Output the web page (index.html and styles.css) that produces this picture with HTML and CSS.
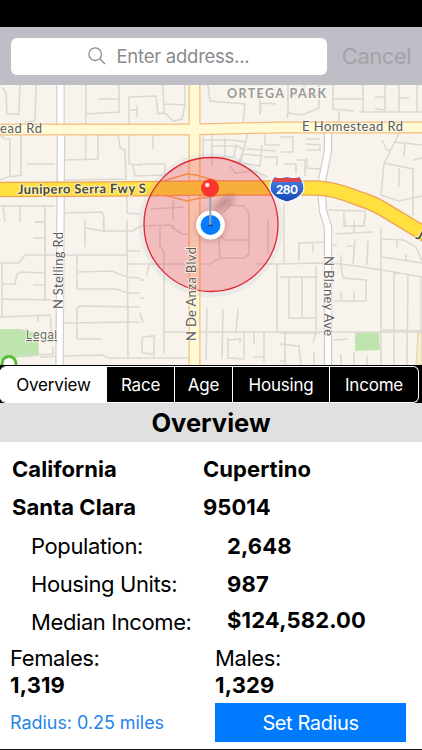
FILE: index.html
```html
<!DOCTYPE html>
<html lang="en">
<head>
    <meta charset="UTF-8">
    <meta name="viewport" content="width=device-width, initial-scale=1.0">
    <title>Overview</title>
    <link rel="stylesheet" href="styles.css">
</head>
<body>
    <div class="status-bar"></div>

    <!-- Search -->
    <div class="search-bar">
        <div class="search-field">
            <svg class="search-icon" viewBox="0 0 18 18">
                <circle cx="7.2" cy="7.2" r="6.3"/>
                <path d="M11.8 11.8L17 17"/>
            </svg>
            <span class="placeholder">Enter address...</span>
        </div>
        <span class="cancel">Cancel</span>
    </div>

    <!-- Map -->
    <svg class="map" viewBox="0 85 422 280">
        <defs>
            <linearGradient id="shield" x1="0" y1="0" x2="0" y2="1">
                <stop offset="0" stop-color="#4b86e8"/>
                <stop offset="1" stop-color="#1546b5"/>
            </linearGradient>
            <filter id="soft" x="-50%" y="-50%" width="200%" height="200%">
                <feGaussianBlur stdDeviation="3"/>
            </filter>
        </defs>

        <!-- Parks -->
        <path class="park" d="M0 329L20 329L28 331L38 333L39 356L14 358L0 360Z"/>
        <path class="park" d="M355 333L379 332L380 350L355 351Z"/>
        <path class="school" d="M422 333H418L416 365H422Z"/>

        <!-- Small streets -->
        <g class="street">
            <path d="M2 87L6 93L7 114H19L20 85M36 85L35 121L25 122M86 85L85.500 161M86 114L119 112V85M98 99H119M129 124V97L156 96L158 114M130 110H137M137 105V117M163 85L164 113L157 114M164 104L185 105L182 119L173 121L165 113M185 85V105"/>
            <path d="M0 135L5 139H10V176L0 180M21 133V175L10 177M27 164H55M65 160L98 159V135L118 134L120 148L125 150L126 179L65 180M129 133V164L142 165M133 165L135 176L165 175V164H140M153 134V149M0 206H55M3 206L5 222M20 205V222M35 222H46M45 206V300M65 213L102 212L104 218V232M127 196V213L140 214"/>
            <path d="M208 85L210 101L245 104L243 123M260 90V113M260 103L276 104M261 105L260 115M288 85V113L287 118M288 113L302 115L319 108V85M288 95H319M304 85V95M333 85V109L354 111M333 99H363M339 111V123M363 85V111M375 97H385M385 85V110L375 109M359 112H422M399 85V112M417 85V112M399 98H409"/>
            <path d="M203 137V158M212 134V166M203 140H230L246 142M212 146H235M212 157H234L236 145L244 150L238 163M225 138V156M248 133L240 163L260 166L262 145M246 149L276 151M265 133V145H280M264 157H277V166M243 154L263 156M280 137H293V152H281M306 144L320 145V150H307M306 139H320M307 158V168L320 169M284 164H296V174M296 160H305V176"/>
            <path d="M382 140L387 150L391 151M399 133L384 164L381 195L399 201L422 196M384 163L413 169V216M394 142L422 145M405 143L404 156M422 158L413 160M399 168V187M328 210L365 211V222M344 211V226H363"/>
            <path d="M35 222H45M33 238H45M0 263H19L25 255H128M45 220V299M2 263V316M2 284H15L17 274L22 272L45 273M33 285H45M2 299L53 300M0 317L50 315L52 334M38 314V322M27 328L24 333M53 346V354L19 356M40 357L64 356L102 355L109 358H141"/>
            <path d="M85 220V247M85 228L104 231H133L140 226M103 220L104 230M127 220L128 358M128 251H140M77 256V289H117L127 293H140M77 272L112 271L127 277L140 278M128 264H140M63 323L140 322M77 339V308L80 306L140 307M77 339H102M128 308V323"/>
            <path d="M140 226L170 225L182 234H188M160 225V246L164 252V353M140 264H210L220 258H244L249 254V220M218 228L220 258M173 225V230M149 265L147 275M140 280H144M140 298H144M140 313L143 323M164 332H422M143 337L154 336V357M142 337V353L154 354M140 358H188M207 308L206 360M223 309L222 359M238 309L236 332M228 337V358L244 359V332M229 340L240 339V343M254 332V344M264 332V362M253 357H264M256 264H280M277 265V332"/>
            <path d="M202 198H210M223 213L230 205L244 206L249 213V220M221 213V236L225 240M225 240H250M268 220V253M173 200V220M151 209L184 207M230 166L235 173L254 171L268 177"/>
            <path d="M284 204V263M280 264L318 263L342 264L382 270L422 277M280 277H318M299 261V243L330 242M313 243V252M335 234L373 232M345 220V226H364V220M333 245H337M354 221V232M353 264L355 239M367 265L368 241M347 246H354M341 255V265L343 278L366 280V301H334M340 292L342 300M354 292V302M316 265V332L313 343M289 277V318H315M302 277V318M381 228V365M382 239L404 240L416 247L422 261M397 241V248M406 254V261M382 257L422 263M394 271V365M408 275L407 365M421 276V332M382 330L422 331M280 333H320M285 332V365M280 344L299 346L301 365M280 361H285M314 352V365M334 340L348 339M341 354V365M354 352V365M367 356V365"/>
        </g>

        <!-- Main roads -->
        <path class="road-edge" d="M60.500 84V136L61 138L59.500 370"/>
        <path class="road" d="M60.500 84V136L61 138L59.500 370"/>
        <path class="road-edge" d="M328 128V151L321 186L323 211L328 227V370"/>
        <path class="road" d="M328 128V151L321 186L323 211L328 227V370"/>
        <path class="avenue-edge" d="M-4 129.500H190L280 127.500H426M194.500 84V370"/>
        <path class="avenue" d="M-4 129.500H190L280 127.500H426M194.500 84V370"/>
        <path class="ramp" d="M160 182L187 174L196 175L225 183M160 194L187 201L200 198L230 194"/>
        <path class="freeway-edge" d="M-4 189.500L120 189L205 188H315Q333 188 357 198Q371 202 383 209L426 235"/>
        <path class="freeway" d="M-4 189.500L120 189L205 188H315Q333 188 357 198Q371 202 383 209L426 235"/>

        <!-- Radius -->
        <circle class="halo" cx="211" cy="225" r="69.500"/>
        <circle class="radius" cx="211" cy="224.500" r="67"/>

        <!-- Labels -->
        <text class="label area" x="227" y="98" textLength="99">ORTEGA PARK</text>
        <text class="label" x="0" y="132.500" textLength="42">ead Rd</text>
        <text class="label" x="302" y="130.500" textLength="101">E Homestead Rd</text>
        <text class="label fwy" x="18" y="194" textLength="128" transform="rotate(-0.500 18 194)">Junipero Serra Fwy S</text>
        <text class="label fwy" x="415" y="238" transform="rotate(28 415 238)">J</text>
        <text class="label" transform="translate(63 309) rotate(-90)" textLength="77">N Stelling Rd</text>
        <text class="label" transform="translate(196 341) rotate(-90)" textLength="94">N De Anza Blvd</text>
        <text class="label" transform="translate(324 256) rotate(90)" textLength="80">N Blaney Ave</text>
        <text class="label legal" x="26" y="339" textLength="31">Legal</text>
        <circle class="poi" cx="9" cy="363.500" r="7"/>

        <!-- Interstate sign -->
        <path class="sign" d="M274 176.500Q280 178.500 287 176.500Q294 178.500 300 176.500Q306 186 303 192Q299 199 287 202Q275 199 271 192Q268 186 274 176.500Z"/>
        <path class="sign-top" d="M274.500 177.500Q280 179 287 177.500Q294 179 299.500 177.500L302 182H272Z"/>
        <text class="sign-text" x="287" y="193.500" textLength="22">280</text>

        <!-- Location and pin -->
        <ellipse class="pin-shadow" cx="224" cy="203" rx="12" ry="4" transform="rotate(-35 224 203)"/>
        <circle class="dot-shadow" cx="210.500" cy="226" r="15"/>
        <circle class="dot" cx="210.500" cy="225" r="12.200"/>
        <path class="needle" d="M210.300 195V225"/>
        <path class="needle-tip" d="M208 225.500H213"/>
        <circle class="pin" cx="210" cy="188" r="9"/>
        <circle class="shine" cx="207.300" cy="185" r="2.300"/>
    </svg>

    <!-- Tabs -->
    <div class="tabs">
        <div class="tab-group">
            <div class="tab active">Overview</div>
            <div class="tab">Race</div>
            <div class="tab">Age</div>
            <div class="tab">Housing</div>
            <div class="tab">Income</div>
        </div>
    </div>

    <h1 class="title">Overview</h1>

    <div class="content">
        <div class="place">
            <span>California</span><span>Cupertino</span>
            <span>Santa Clara</span><span>95014</span>
        </div>
        <div class="stats">
            <span>Population:</span><strong>2,648</strong>
            <span>Housing Units:</span><strong>987</strong>
            <span>Median Income:</span><strong class="income">$124,582.00</strong>
        </div>
        <div class="people">
            <span>Females:</span><span>Males:</span>
            <strong>1,319</strong><strong>1,329</strong>
        </div>
        <div class="footer">
            <span class="radius-text">Radius: 0.25 miles</span>
            <button class="set-radius">Set Radius</button>
        </div>
    </div>
</body>
</html>
```
FILE: styles.css
```css
body {
    margin: 0;
    width: 422px;
    height: 750px;
    box-sizing: border-box;
    border-bottom: 1px solid #111;
    font-family: Inter, "Liberation Sans", sans-serif;
    background: #fff;
    color: #000;
    overflow: hidden;
}

.status-bar {
    height: 27px;
    background: #000;
}

/* Search */
.search-bar {
    display: flex;
    align-items: center;
    height: 58px;
    box-sizing: border-box;
    padding: 0 11px;
    background: #bfbdc5;
}

.search-field {
    display: flex;
    align-items: center;
    justify-content: center;
    gap: 10px;
    width: 316px;
    height: 37px;
    border-radius: 6px;
    background: #fff;
    color: #8a8a8f;
    font-size: 18.5px;
    letter-spacing: -0.25px;
}

.search-icon {
    width: 18px;
    height: 18px;
    fill: none;
    stroke: #8a8a8f;
    stroke-width: 1.3;
}

.cancel {
    margin-left: 15px;
    color: #a3a2a8;
    font-size: 22px;
    letter-spacing: -0.5px;
}

/* Map */
.map {
    display: block;
    width: 422px;
    height: 280px;
    background: #f8f4ed;
}

.map path {
    fill: none;
}

.map .park {
    fill: #bfe5ae;
}

.map .school {
    fill: #f5ecce;
    stroke: #ddd2b0;
}

.street {
    stroke: #dcd9d3;
    stroke-width: 1.6;
}

.road-edge {
    stroke: #d3d0ca;
    stroke-width: 8.5;
}

.road {
    stroke: #fff;
    stroke-width: 6;
}

.avenue-edge {
    stroke: #f5bd7c;
    stroke-width: 12;
}

.avenue {
    stroke: #fffad4;
    stroke-width: 9.5;
}

.ramp {
    stroke: #f7b04c;
    stroke-width: 1.5;
}

.freeway-edge {
    stroke: #f0a25a;
    stroke-width: 15.5;
}

.freeway {
    stroke: #ffe03e;
    stroke-width: 13;
}

.halo {
    fill: none;
    stroke: rgba(150, 180, 200, 0.14);
    stroke-width: 5;
}

.radius {
    fill: rgba(228, 24, 52, 0.25);
    stroke: #e0262f;
    stroke-width: 1.3;
}

.label {
    fill: #5b5b5b;
    stroke: #fdfaf3;
    stroke-width: 2;
    stroke-opacity: 0.75;
    paint-order: stroke;
    font-family: Lato, sans-serif;
    font-size: 13px;
}

.area {
    fill: #999;
    font-weight: bold;
    font-size: 12.5px;
}

.fwy {
    fill: #4c4a35;
    font-weight: bold;
}

.legal {
    fill: #6a6a66;
    font-family: Inter, sans-serif;
    font-size: 11.5px;
    text-decoration: underline;
}

.poi {
    fill: #fff;
    stroke: #58bd36;
    stroke-width: 3;
}

.map .sign {
    fill: url(#shield);
    stroke: #fff;
    stroke-width: 1.2;
}

.map .sign-top {
    fill: #dc4450;
}

.sign-text {
    fill: #fff;
    text-anchor: middle;
    font-size: 12px;
    font-weight: bold;
}

.pin-shadow {
    fill: rgba(70, 20, 30, 0.35);
    filter: url(#soft);
}

.dot-shadow {
    fill: rgba(80, 30, 40, 0.25);
    filter: url(#soft);
}

.dot {
    fill: #087cff;
    stroke: #fff;
    stroke-width: 4.5;
}

.needle {
    stroke: #97a2af;
    stroke-width: 2;
}

.needle-tip {
    stroke: #174578;
    stroke-width: 1.5;
}

.pin {
    fill: #fb352d;
}

.shine {
    fill: #ffe0dc;
}

/* Tabs */
.tabs {
    height: 38px;
    box-sizing: border-box;
    padding: 1px 3px 0 0;
    background: #000;
}

.tab-group {
    display: grid;
    grid-template-columns: 106px 68px 58px 97px 1fr;
    height: 37px;
    box-sizing: border-box;
    border: 1px solid #fff;
    border-left: 0;
    border-radius: 6px;
    overflow: hidden;
}

.tab {
    display: flex;
    align-items: center;
    justify-content: center;
    border-left: 1px solid #fff;
    color: #fff;
    font-size: 17px;
    letter-spacing: -0.2px;
}

.active {
    background: #fff;
    color: #000;
}

.title {
    margin: 0;
    height: 39px;
    line-height: 39px;
    background: #e0e0e0;
    text-align: center;
    font-size: 25.5px;
    font-weight: 700;
}

/* Data */
.content {
    padding-top: 8px;
    font-size: 22px;
    letter-spacing: -0.4px;
}

.content strong {
    font-weight: 700;
    letter-spacing: 0.15px;
}

.place,
.stats,
.people {
    display: grid;
    line-height: 38px;
}

.place {
    grid-template-columns: 191px 1fr;
    padding-left: 12px;
    font-weight: 700;
    letter-spacing: 0.05px;
}

.stats {
    grid-template-columns: 196px 1fr;
    padding: 1px 0 0 31px;
}

.income {
    margin-top: -2px;
    line-height: 38px;
}

.people {
    grid-template-columns: 205px 1fr;
    grid-auto-rows: 27px;
    padding: 4px 0 4px 10px;
    line-height: 27px;
}

.footer {
    display: flex;
    align-items: center;
    justify-content: space-between;
    padding: 0 16px 0 10px;
}

.radius-text {
    color: #2485e8;
    font-size: 18px;
    letter-spacing: -0.05px;
}

.set-radius {
    width: 191px;
    height: 39px;
    padding: 0;
    border: none;
    background: #007aff;
    color: #fff;
    font-family: inherit;
    font-size: 20px;
    letter-spacing: -0.4px;
}
```
